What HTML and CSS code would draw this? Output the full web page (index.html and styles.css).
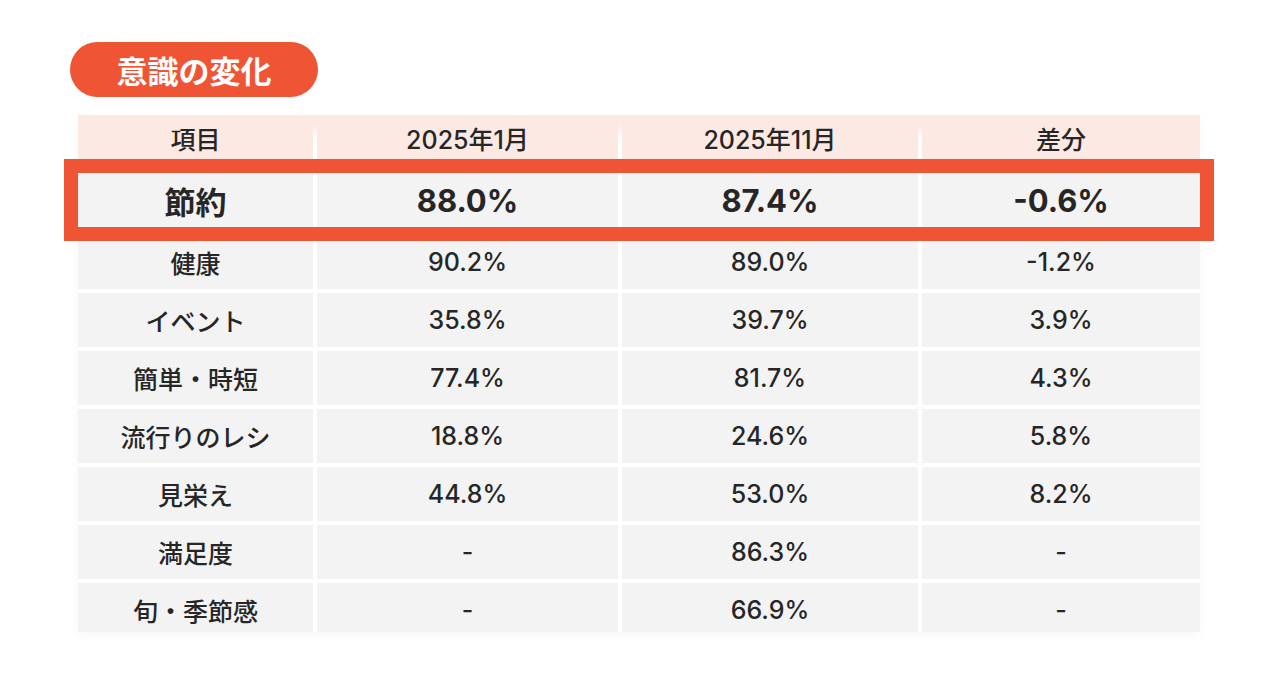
FILE: index.html
```html
<!DOCTYPE html>
<html lang="ja">
<head>
<meta charset="utf-8">
<link rel="stylesheet" href="styles.css">
</head>
<body>
<div class="page">
  <div class="pill">意識の変化</div>
  <div class="table">
    <div class="row head">
      <div class="cell">項目</div>
      <div class="cell sep">2025年1月</div>
      <div class="cell sep">2025年11月</div>
      <div class="cell sep">差分</div>
    </div>
    <div class="row hl">
      <div class="cell">節約</div>
      <div class="cell">88.0%</div>
      <div class="cell">87.4%</div>
      <div class="cell">-0.6%</div>
    </div>
    <div class="row body first">
      <div class="cell">健康</div>
      <div class="cell">90.2%</div>
      <div class="cell">89.0%</div>
      <div class="cell">-1.2%</div>
    </div>
    <div class="row body">
      <div class="cell">イベント</div>
      <div class="cell">35.8%</div>
      <div class="cell">39.7%</div>
      <div class="cell">3.9%</div>
    </div>
    <div class="row body">
      <div class="cell">簡単・時短</div>
      <div class="cell">77.4%</div>
      <div class="cell">81.7%</div>
      <div class="cell">4.3%</div>
    </div>
    <div class="row body">
      <div class="cell">流行りのレシ</div>
      <div class="cell">18.8%</div>
      <div class="cell">24.6%</div>
      <div class="cell">5.8%</div>
    </div>
    <div class="row body">
      <div class="cell">見栄え</div>
      <div class="cell">44.8%</div>
      <div class="cell">53.0%</div>
      <div class="cell">8.2%</div>
    </div>
    <div class="row body">
      <div class="cell">満足度</div>
      <div class="cell">-</div>
      <div class="cell">86.3%</div>
      <div class="cell">-</div>
    </div>
    <div class="row body last">
      <div class="cell">旬・季節感</div>
      <div class="cell">-</div>
      <div class="cell">66.9%</div>
      <div class="cell">-</div>
    </div>
  </div>
</div>
</body>
</html>
```

FILE: styles.css
```css
* { box-sizing: border-box; }
html, body { margin: 0; padding: 0; background: #ffffff; }
body {
  width: 1280px;
  height: 674px;
  overflow: hidden;
  font-family: Inter, "Noto Sans CJK JP", sans-serif;
  color: #262626;
}
.page {
  padding: 42px 0 0 0;
}
.pill {
  margin-left: 70px;
  width: 248px;
  height: 55px;
  border-radius: 28px;
  background: #ef5535;
  color: #ffffff;
  font-family: "Noto Sans CJK JP", sans-serif;
  font-weight: 700;
  font-size: 31px;
  display: flex;
  align-items: center;
  justify-content: center;
}
.table {
  margin: 18px 0 0 78px;
  width: 1122px;
  display: flex;
  flex-direction: column;
  gap: 4px;
  box-shadow: 0 3px 10px rgba(0,0,0,0.035);
}
.row {
  display: grid;
  grid-template-columns: 235px 301px 296px 278px;
  column-gap: 4px;
}
.cell {
  display: flex;
  align-items: center;
  justify-content: center;
  font-size: 25px;
  font-weight: 500;
}
.head {
  height: 44px;
  background: #fde9e4;
  margin-bottom: -4px;
}
.head .cell {
  position: relative;
  padding-top: 2px;
}
.head .sep::before {
  content: "";
  position: absolute;
  left: -4px;
  top: 10px;
  bottom: 0;
  width: 4px;
  background: linear-gradient(#fde9e4, #ffffff 40%);
}
.hl {
  position: relative;
  z-index: 1;
  margin: 0 -14px;
  border: 14px solid #ef5535;
  height: 82px;
  background: #ffffff;
}
.hl .cell {
  background: #f3f3f3;
  font-size: 31px;
  font-weight: 700;
}
.body {
  height: 54px;
}
.body .cell {
  background: #f3f3f3;
}
.first {
  margin-top: -10px;
}
.last {
  height: 49px;
}
.last .cell {
  padding-top: 4px;
}
```
